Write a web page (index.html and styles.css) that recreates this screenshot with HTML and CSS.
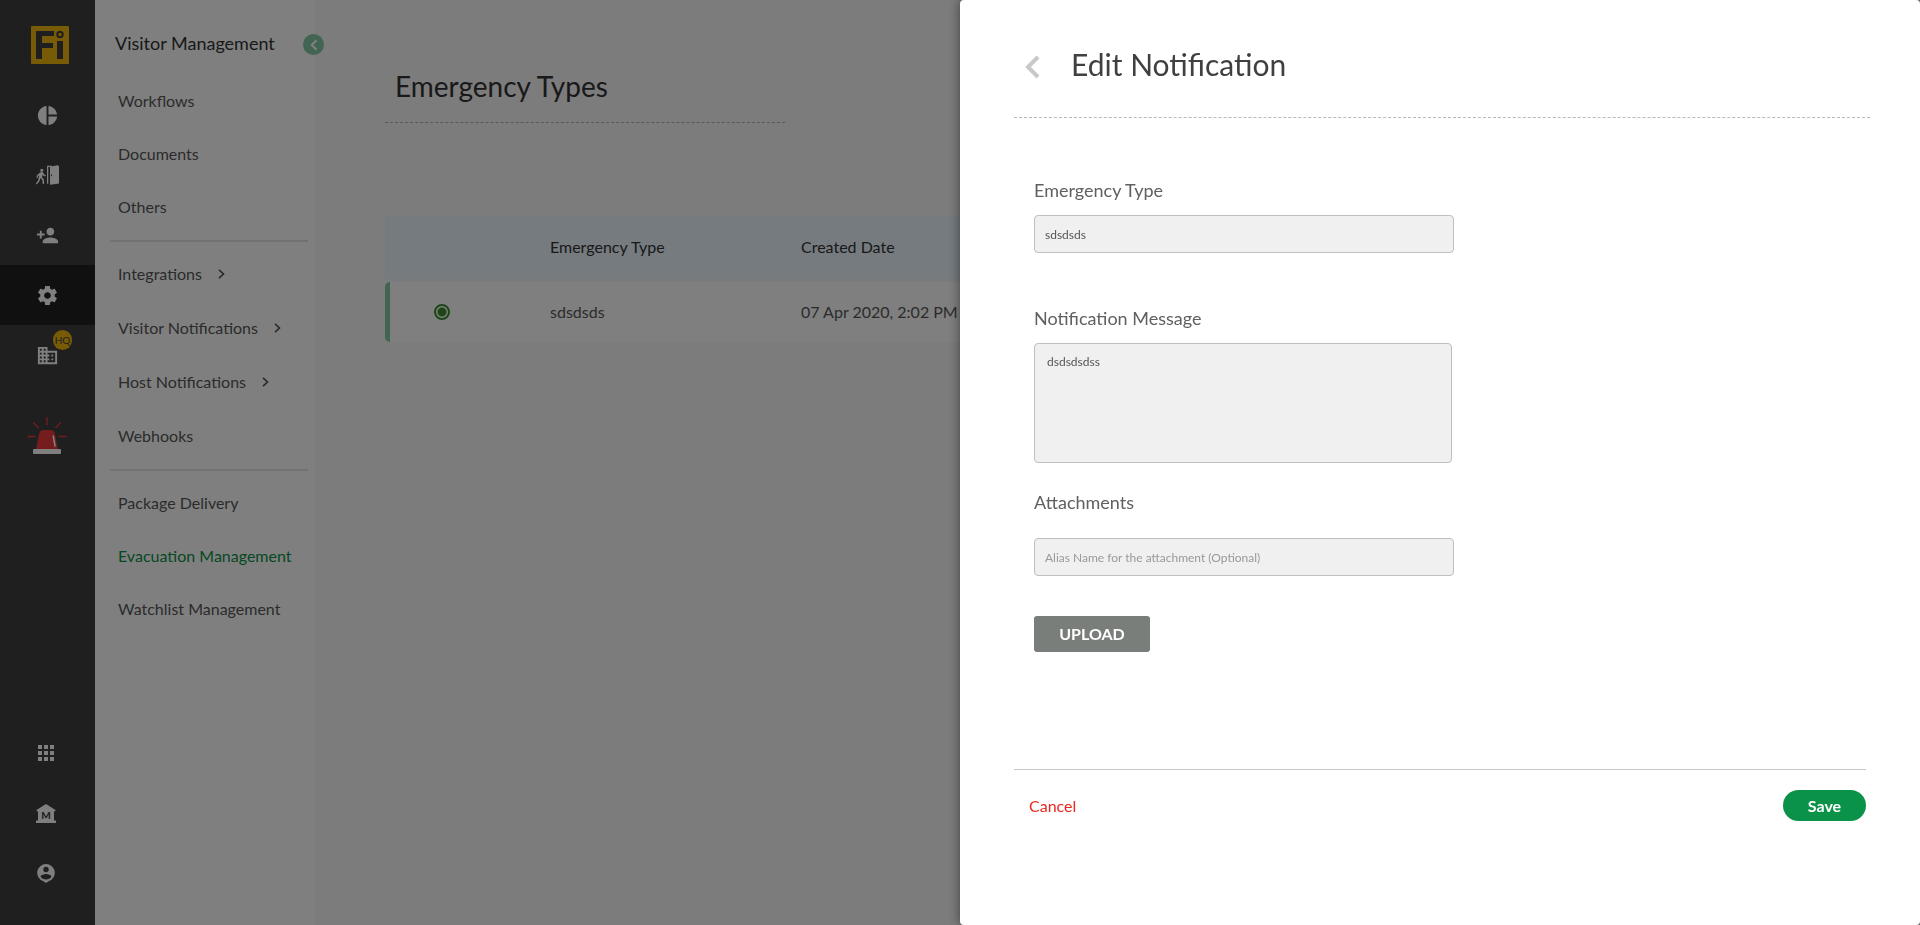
FILE: index.html
```html
<!DOCTYPE html>
<html lang="en">
<head>
<meta charset="utf-8">
<title>Edit Notification</title>
<link rel="stylesheet" href="styles.css">
</head>
<body>
<div class="app">
  <nav class="rail" aria-label="Main">
    <a class="logo" href="#" aria-label="Home">
      <svg width="38" height="38" viewBox="0 0 38 38">
        <rect width="38" height="38" rx="1" fill="#f1b70d"/>
        <g fill="#3f3f3f">
          <rect x="5" y="5" width="6" height="28"/>
          <rect x="5" y="5" width="18" height="5"/>
          <rect x="5" y="17" width="17" height="5"/>
          <rect x="26" y="15" width="6" height="18"/>
        </g>
        <circle cx="29" cy="8.500" r="2.700" fill="none" stroke="#3f3f3f" stroke-width="2"/>
      </svg>
    </a>
    <div class="rail-group">
      <a class="rail-item" href="#" aria-label="Dashboard"><svg class="icon" viewBox="0 0 24 24"><path d="M11 2v20c-5.070-.5-9-4.790-9-10s3.930-9.500 9-10zm2.030 0v8.990H22c-.47-4.740-4.240-8.520-8.970-8.990zm0 11.010V22c4.740-.47 8.500-4.250 8.970-8.990h-8.970z"/></svg></a>
      <a class="rail-item" href="#" aria-label="Visits">
        <svg class="icon-door" viewBox="0 0 23 20">
          <circle cx="5.800" cy="5.200" r="1.500"/>
          <path d="M4.300 7.200 6.800 7l1.400 2.600 1.700.7-.5 1.100-2.200-.8-.6-.9-.6 2.500 1.900 2.200.2 4.600H6.700l-.3-3.900-2.200-2-.6 2.900L.9 19.400l-1-.9 2.200-2.900 1-5.400-1.100.8-.4 2-1.200-.3.500-2.500z"/>
          <path d="M11 .8h5v1.200h-3.700v16.800H11z"/>
          <path fill-rule="evenodd" d="M14 1.800 21.500.3 23 .9v17.500l-9 1.400zM15 9.500v1.600l1 .1V9.400z"/>
        </svg>
      </a>
      <a class="rail-item" href="#" aria-label="Add visitor"><svg class="icon" viewBox="0 0 24 24"><path d="M15 12c2.210 0 4-1.790 4-4s-1.790-4-4-4-4 1.790-4 4 1.790 4 4 4zm-9-2V7H4v3H1v2h3v3h2v-3h3v-2H6zm9 4c-2.670 0-8 1.340-8 4v2h16v-2c0-2.660-5.330-4-8-4z"/></svg></a>
      <a class="rail-item rail-item-active" href="#" aria-label="Settings"><svg class="icon" viewBox="0 0 24 24"><path d="M19.430 12.980c.04-.32.070-.64.070-.98s-.03-.66-.07-.98l2.110-1.650c.19-.15.24-.42.120-.64l-2-3.460c-.12-.22-.39-.3-.61-.22l-2.490 1c-.52-.4-1.080-.73-1.690-.98l-.38-2.650C14.460 2.180 14.250 2 14 2h-4c-.25 0-.46.18-.49.420l-.38 2.650c-.61.25-1.170.59-1.690.98l-2.490-1c-.23-.09-.49 0-.61.220l-2 3.460c-.13.220-.07.490.12.640l2.110 1.650c-.04.320-.07.650-.07.980s.03.660.070.980l-2.110 1.650c-.19.150-.24.420-.12.640l2 3.460c.12.220.39.300.61.220l2.490-1c.52.400 1.080.730 1.690.980l.38 2.650c.03.240.24.420.49.420h4c.25 0 .46-.18.490-.42l.38-2.650c.61-.25 1.170-.59 1.690-.98l2.490 1c.23.090.49 0 .61-.22l2-3.460c.12-.22.070-.49-.12-.64l-2.110-1.650zM12 15.500c-1.930 0-3.500-1.570-3.500-3.500s1.570-3.500 3.500-3.500 3.500 1.570 3.500 3.500-1.570 3.500-3.500 3.500z"/></svg></a>
      <a class="rail-item" href="#" aria-label="Buildings"><svg class="icon" viewBox="0 0 24 24"><path d="M12 7V3H2v18h20V7H12zM6 19H4v-2h2v2zm0-4H4v-2h2v2zm0-4H4V9h2v2zm0-4H4V5h2v2zm4 12H8v-2h2v2zm0-4H8v-2h2v2zm0-4H8V9h2v2zm0-4H8V5h2v2zm10 12h-8v-2h2v-2h-2v-2h2v-2h-2V9h8v10zm-2-8h-2v2h2v-2zm0 4h-2v2h2v-2z"/></svg><span class="badge">HQ</span></a>
      <a class="rail-item rail-item-tall" href="#" aria-label="Emergency">
        <svg width="40" height="37" viewBox="0 0 40 37">
          <g stroke="#e8393c" stroke-width="1.300">
            <path d="M20 0v8M6.500 5.500l5 5.500M33.500 5.500l-5 5.500M.5 19.500h8M31.500 19.500h8"/>
          </g>
          <path fill="#e8393c" d="M9.200 32 12 17q.8-4 4.500-4h7q3.700 0 4.500 4l2.800 15z"/>
          <path d="M26.300 19l1.700 10" stroke="#fff" stroke-width="1.600" stroke-linecap="round"/>
          <rect x="6" y="32" width="28" height="5" rx="1" fill="#fff"/>
        </svg>
      </a>
    </div>
    <div class="rail-group rail-bottom">
      <a class="rail-item" href="#" aria-label="Apps"><svg width="24" height="24" viewBox="0 0 24 24"><path d="M4 8h4V4H4v4zm6 12h4v-4h-4v4zm-6 0h4v-4H4v4zm0-6h4v-4H4v4zm6 0h4v-4h-4v4zm6-10v4h4V4h-4zm-6 4h4V4h-4v4zm6 6h4v-4h-4v4zm0 6h4v-4h-4v4z"/></svg></a>
      <a class="rail-item" href="#" aria-label="Marketplace">
        <svg width="20" height="19" viewBox="0 0 20 19">
          <path d="M10 0 19.500 6v1.200H18V16.500h2V19H0v-2.500h2V7.200H.5V6z"/>
          <text class="icon-letter" x="10" y="14.500" text-anchor="middle">M</text>
        </svg>
      </a>
      <a class="rail-item" href="#" aria-label="Profile">
        <svg width="18" height="19" viewBox="0 0 18 19"><path fill-rule="evenodd" d="M9 0a8.800 8.800 0 0 1 2.600 17.200L9 19l-2.600-1.800A8.800 8.800 0 0 1 9 0zM9 2.800a2.700 2.700 0 1 0 0 5.400 2.700 2.700 0 0 0 0-5.400zM3.600 12.700a6.500 6.500 0 0 0 10.800 0C14.400 11 10.800 10 9 10s-5.400 1-5.400 2.700z"/></svg>
      </a>
    </div>
  </nav>

  <aside class="side">
    <h2 class="side-title">Visitor Management</h2>
    <button class="collapse" type="button" aria-label="Collapse menu"><svg width="8" height="12" viewBox="0 0 8 12"><path d="M6.500 1.200 1.800 6l4.700 4.800" fill="none" stroke="#fff" stroke-width="2.200"/></svg></button>
    <ul class="menu">
      <li><a href="#">Workflows</a></li>
      <li><a href="#">Documents</a></li>
      <li><a href="#">Others</a></li>
    </ul>
    <hr class="divider">
    <ul class="menu">
      <li><a class="parent" href="#">Integrations<svg class="chev" viewBox="0 0 7 10"><path d="M1 .8 5.500 5 1 9.200"/></svg></a></li>
      <li><a class="parent" href="#">Visitor Notifications<svg class="chev" viewBox="0 0 7 10"><path d="M1 .8 5.500 5 1 9.200"/></svg></a></li>
      <li><a class="parent" href="#">Host Notifications<svg class="chev" viewBox="0 0 7 10"><path d="M1 .8 5.500 5 1 9.200"/></svg></a></li>
      <li><a href="#">Webhooks</a></li>
    </ul>
    <hr class="divider">
    <ul class="menu">
      <li><a href="#">Package Delivery</a></li>
      <li><a class="current" href="#">Evacuation Management</a></li>
      <li><a href="#">Watchlist Management</a></li>
    </ul>
  </aside>

  <main class="main">
    <h1 class="page-title">Emergency Types</h1>
    <table class="types">
      <thead>
        <tr><th class="col-pick"></th><th class="col-type">Emergency Type</th><th>Created Date</th></tr>
      </thead>
      <tbody>
        <tr><td class="pick"><input class="radio" type="radio" name="type" aria-label="sdsdsds" checked></td><td>sdsdsds</td><td>07 Apr 2020, 2:02 PM</td></tr>
      </tbody>
    </table>
  </main>
</div>

<div class="backdrop"></div>

<form class="drawer">
  <header class="drawer-head">
    <button class="back" type="button" aria-label="Back"><svg width="15" height="24" viewBox="0 0 15 24"><path d="M13 2 3 12l10 10" fill="none" stroke="#c8c8c8" stroke-width="4"/></svg></button>
    <h2 class="drawer-title">Edit Notification</h2>
  </header>
  <div class="fields">
    <label class="label" for="etype">Emergency Type</label>
    <input class="control" id="etype" type="text" value="sdsdsds">
    <label class="label label-message" for="message">Notification Message</label>
    <textarea class="control area" id="message">dsdsdsdss</textarea>
    <label class="label label-attach" for="alias">Attachments</label>
    <input class="control" id="alias" type="text" placeholder="Alias Name for the attachment (Optional)">
    <button class="upload" type="button">UPLOAD</button>
  </div>
  <footer class="drawer-foot">
    <button class="cancel" type="button">Cancel</button>
    <button class="save" type="submit">Save</button>
  </footer>
</form>
</body>
</html>
```
FILE: styles.css
```css
* {
  box-sizing: border-box;
}

body {
  margin: 0;
  font-family: Lato, "Liberation Sans", sans-serif;
  font-size: 16px;
  line-height: 20px;
  color: #333;
  overflow: hidden;
}

button,
input,
textarea {
  font: inherit;
}

button {
  border: 0;
  padding: 0;
  background: none;
  cursor: pointer;
}

h1,
h2 {
  margin: 0;
  font-weight: 400;
}

a {
  color: inherit;
  text-decoration: none;
}

.app {
  display: flex;
  height: 100vh;
  background: #f8f8f8;
}

/* Icon rail */
.rail {
  flex: 0 0 95px;
  display: flex;
  flex-direction: column;
  background: #3f3f3f;
}

.logo {
  height: 85px;
  padding: 26px 0 0 31px;
}

.logo svg {
  display: block;
}

.rail-item {
  position: relative;
  display: flex;
  align-items: center;
  justify-content: center;
  height: 60px;
  fill: #fff;
}

.rail-item-tall {
  height: 101px;
  padding-right: 1px;
}

.rail-item-active {
  background: #202020;
}

.rail-bottom {
  margin-top: auto;
  padding: 0 3px 22px 0;
}

.icon {
  width: 23px;
  height: 23px;
}

.icon-door {
  width: 23px;
  height: 20px;
  overflow: visible;
}

.icon-letter {
  font-size: 10px;
  font-weight: 900;
  fill: #3f3f3f;
}

.badge {
  position: absolute;
  left: 53px;
  top: 5px;
  width: 19px;
  height: 20px;
  border-radius: 10px;
  background: #f1b70d;
  color: #3f3f3f;
  font-size: 10px;
  line-height: 21px;
  text-align: center;
}

/* Section menu */
.side {
  position: relative;
  flex: 0 0 220px;
  padding: 33px 7px 0 15px;
  background: #fff;
}

.side-title {
  margin: 0 0 21px 5px;
  font-size: 18px;
  line-height: 20px;
}

.collapse {
  position: absolute;
  top: 34px;
  right: -9px;
  display: flex;
  align-items: center;
  justify-content: center;
  width: 21px;
  height: 21px;
  border-radius: 50%;
  background: #85c9a4;
}

.menu {
  margin: 0;
  padding: 0 0 0 8px;
  list-style: none;
  color: #575757;
}

.menu a {
  display: flex;
  align-items: center;
  gap: 16px;
  height: 53px;
}

.menu .parent {
  height: 54px;
}

.menu .current {
  color: #0b9249;
}

.chev {
  width: 7px;
  height: 10px;
  fill: none;
  stroke: #505050;
  stroke-width: 1.6;
}

.divider {
  height: 2px;
  margin: 7px 0 5px;
  border: 0;
  background: #e4e4e4;
}

/* Page */
.main {
  flex: 1;
  padding: 68px 70px 0;
}

.page-title {
  width: 400px;
  height: 55px;
  margin-bottom: 93px;
  padding-left: 10px;
  border-bottom: 1px dashed #b0b0b0;
  font-size: 28px;
  line-height: 36px;
}

.types {
  width: 100%;
  border-spacing: 0;
  table-layout: fixed;
}

.types th,
.types td {
  padding: 0;
  font-weight: 400;
  text-align: left;
}

.types th {
  height: 66px;
  padding-bottom: 2px;
  background: #ebf6fe;
  border-bottom: 3px solid #f4f7f9;
}

.types td {
  height: 60px;
  background: #fff;
  color: #575757;
}

.col-pick {
  width: 165px;
}

.col-type {
  width: 251px;
}

.types .pick {
  padding-left: 44px;
  border-left: 5px solid #85c9a4;
  border-radius: 5px 0 0 5px;
}

.radio {
  appearance: none;
  display: block;
  width: 16px;
  height: 16px;
  margin: 0;
  border: 2px solid #3c8d33;
  border-radius: 50%;
  background: radial-gradient(circle, #3c8d33 4px, transparent 5px);
}

.backdrop {
  position: fixed;
  inset: 0;
  background: rgba(0, 0, 0, 0.5);
}

/* Drawer */
.drawer {
  position: fixed;
  top: 0;
  right: 0;
  bottom: 0;
  width: 50%;
  padding: 43px 50px 0 54px;
  border-radius: 4px;
  background: #fff;
  box-shadow: 0 0 12px rgba(0, 0, 0, 0.5);
}

.drawer-head {
  display: flex;
  align-items: flex-start;
  gap: 31px;
  height: 75px;
  padding-left: 11px;
  border-bottom: 1px dashed #b9b9b9;
}

.back {
  padding-top: 12px;
}

.back svg {
  display: block;
}

.drawer-title {
  color: #404040;
  font-size: 30px;
  line-height: 42px;
}

.fields {
  display: flex;
  flex-direction: column;
  align-items: flex-start;
  padding: 62px 0 117px 20px;
}

.label {
  margin-bottom: 15px;
  font-size: 18px;
  line-height: 20px;
  color: #606060;
}

.label-message {
  margin-top: 55px;
}

.label-attach {
  margin-top: 29px;
  margin-bottom: 26px;
}

.control {
  width: 420px;
  max-width: 100%;
  height: 38px;
  padding: 0 10px;
  border: 1px solid #bfbfbf;
  border-radius: 4px;
  background: #f0f0f0;
  color: #555;
  font-size: 12px;
}

.control::placeholder {
  color: #999;
}

.area {
  width: 418px;
  height: 120px;
  padding: 8px 12px;
  resize: none;
}

.upload {
  width: 116px;
  height: 36px;
  margin-top: 40px;
  border-radius: 3px;
  background: #7a7e7b;
  color: #fff;
  font-weight: 700;
}

.drawer-foot {
  display: flex;
  justify-content: space-between;
  align-items: center;
  margin-right: 4px;
  padding: 20px 0 0 15px;
  border-top: 1px solid #c9c9c9;
}

.cancel {
  color: #e8281e;
}

.save {
  width: 83px;
  height: 31px;
  border-radius: 16px;
  background: #0b9249;
  color: #fff;
  font-weight: 700;
}
```
